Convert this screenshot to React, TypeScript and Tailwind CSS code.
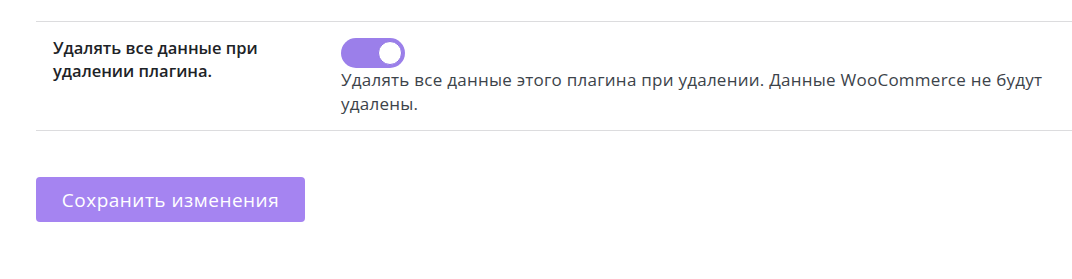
import React, { useState } from "react";

export default function App() {
  const [on, setOn] = useState(true);
  return (
    <div
      className="w-[1072px] h-[279px] bg-white pt-[21px] overflow-hidden"
      style={{ fontFamily: '"Open Sans", "Noto Sans", sans-serif' }}
    >
      <div className="ml-[36px] border-t border-b border-[#dcdcde] flex pt-[16px] pb-[14px]">
        <div className="w-[305px] shrink-0 pl-[17px] pr-4 -mt-[2px] text-[16.5px] leading-[23px] font-semibold text-[#1d2327]">
          <div className="w-[250px]">Удалять все данные при удалении плагина.</div>
        </div>
        <div className="flex-1 min-w-0">
          <button
            type="button"
            onClick={() => setOn(!on)}
            className={`relative block w-[64px] h-[30px] rounded-full ${on ? "bg-[#9b7fea]" : "bg-[#c9c9d0]"}`}
          >
            <span
              className={`absolute top-[3px] w-[24px] h-[24px] rounded-full bg-white border border-[#8f73e4] ${on ? "left-[37px]" : "left-[3px]"}`}
            />
          </button>
          <p className="text-[17px] leading-[24px] tracking-[0.25px] text-[#3c434a] pr-6">
            Удалять все данные этого плагина при удалении. Данные WooCommerce не будут удалены.
          </p>
        </div>
      </div>
      <div className="ml-[36px] mt-[46px]">
        <button
          type="button"
          className="w-[269px] h-[45px] rounded-[4px] bg-[#a584f1] text-white text-[19px] leading-[24px] tracking-[0.5px]"
        >
          Сохранить изменения
        </button>
      </div>
    </div>
  );
}
